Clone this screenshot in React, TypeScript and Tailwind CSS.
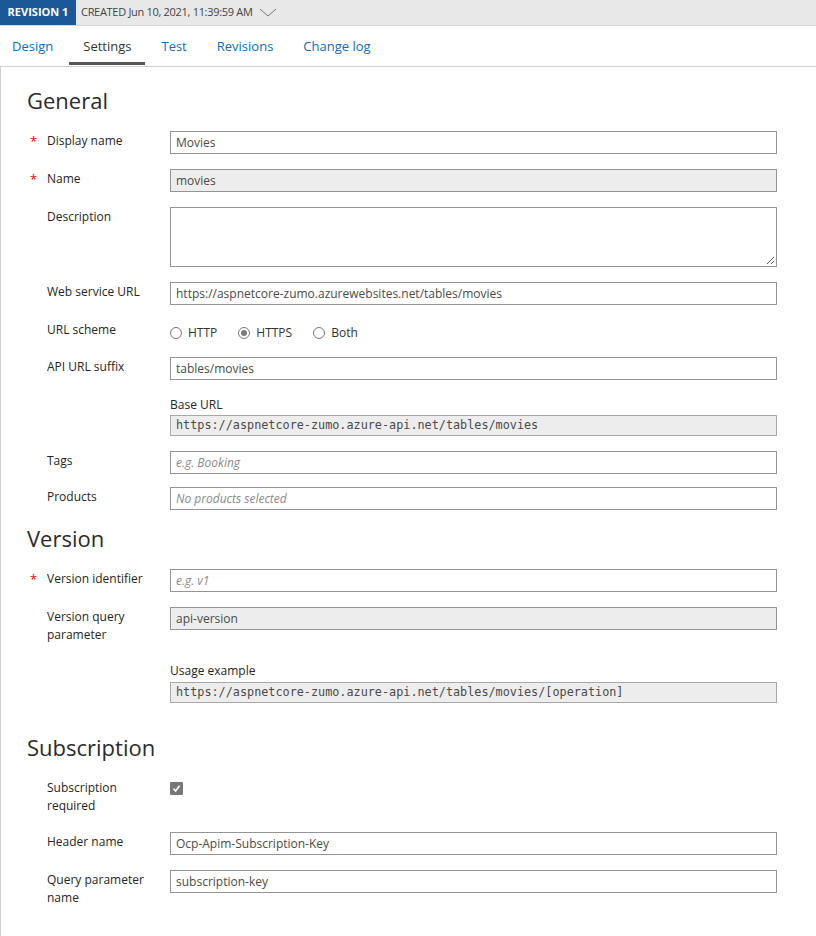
import React from "react";

const font = { fontFamily: '"Open Sans", "Noto Sans", sans-serif' };

function Label({ text, required }: { text: React.ReactNode; required?: boolean }) {
  return (
    <div className="flex w-[143px] shrink-0 pt-[1px]">
      <div className="w-[20px] shrink-0 pl-[3px] text-[13px] leading-[18px] text-[#e00]">{required ? "*" : ""}</div>
      <div className="w-[110px] text-[12px] leading-[18px] text-[#252525]">{text}</div>
    </div>
  );
}

function Input({ value, placeholder, disabled }: { value?: string; placeholder?: string; disabled?: boolean }) {
  return (
    <div
      className={
        "flex h-[23px] w-[607px] items-center border border-[#949494] px-[5px] text-[12px] " +
        (disabled ? "bg-[#ededed] " : "bg-white ")
      }
    >
      {value ? (
        <span className="text-[#4a4a4a]">{value}</span>
      ) : (
        <span className="italic text-[#8a8a8a]">{placeholder}</span>
      )}
    </div>
  );
}

function Row({ label, required, children, className }: { label: React.ReactNode; required?: boolean; children: React.ReactNode; className?: string }) {
  return (
    <div className={"flex " + (className ?? "mb-[15px]")}>
      <Label text={label} required={required} />
      {children}
    </div>
  );
}

function Heading({ children, className }: { children: React.ReactNode; className?: string }) {
  return (
    <div className={"h-[32px] text-[22px] leading-[32px] text-[#2b2b2b] " + (className ?? "")}>{children}</div>
  );
}

function Mono({ text }: { text: string }) {
  return (
    <div className="flex h-[21px] w-[607px] items-center border border-[#a8a8a8] bg-[#ededed] px-[5px] text-[11.8px] text-[#4a4a4a]" style={{ fontFamily: '"DejaVu Sans Mono", monospace' }}>
      {text}
    </div>
  );
}

function Radio({ label, checked }: { label: string; checked?: boolean }) {
  return (
    <div className="flex items-center gap-[6px]">
      <div className="flex h-[12px] w-[12px] items-center justify-center rounded-full border border-[#777] bg-white">
        {checked && <div className="h-[6px] w-[6px] rounded-full bg-[#7a7a7a]" />}
      </div>
      <span className="text-[12px] text-[#333]">{label}</span>
    </div>
  );
}

export default function App() {
  return (
    <div className="h-[936px] w-[816px] bg-white" style={font}>
      {/* top bar */}
      <div className="flex h-[26px] items-center border-b border-[#d6d6d6] bg-[#e8e8e8]">
        <div className="flex h-full w-[76px] items-center justify-center bg-[#1b5898] text-[11px] font-bold text-white">REVISION 1</div>
        <div className="ml-[5px] text-[11px] tracking-[-0.3px] text-[#444]">CREATED Jun 10, 2021, 11:39:59 AM</div>
        <svg width="18" height="10" viewBox="0 0 18 10" className="ml-[6px]">
          <polyline points="1,1 9,8 17,1" fill="none" stroke="#777" strokeWidth="1" />
        </svg>
      </div>
      {/* tabs */}
      <div className="-ml-[2px] flex h-[41px] gap-[2px] border-b border-[#d0d0d0]">
        {["Design", "Settings", "Test", "Revisions", "Change log"].map((t) => {
          const active = t === "Settings";
          return (
            <div key={t} className="relative flex items-center px-[14px] pt-[2px] text-[13px]">
              <span className={active ? "text-[#333]" : "text-[#0f6cbd]"}>{t}</span>
              {active && <div className="absolute bottom-[1px] left-0 right-0 h-[3px] bg-[#555]" />}
            </div>
          );
        })}
      </div>
      {/* content */}
      <div className="border-l border-[#cfcfcf] pl-[26px] pt-[17px]">
        <Heading className="mb-[15px]">General</Heading>
        <Row label="Display name" required>
          <Input value="Movies" />
        </Row>
        <Row label="Name" required>
          <Input value="movies" disabled />
        </Row>
        <Row label="Description">
          <div className="relative h-[60px] w-[607px] border border-[#949494]">
            <svg width="9" height="9" viewBox="0 0 9 9" className="absolute bottom-[1px] right-[1px]">
              <line x1="8" y1="1" x2="1" y2="8" stroke="#555" strokeWidth="1" />
              <line x1="8" y1="5" x2="5" y2="8" stroke="#555" strokeWidth="1" />
            </svg>
          </div>
        </Row>
        <Row label="Web service URL">
          <Input value="https://aspnetcore-zumo.azurewebsites.net/tables/movies" />
        </Row>
        <Row label="URL scheme">
          <div className="flex h-[22px] items-center gap-[21px] pt-[4px]">
            <Radio label="HTTP" />
            <Radio label="HTTPS" checked />
            <Radio label="Both" />
          </div>
        </Row>
        <Row label="API URL suffix">
          <Input value="tables/movies" />
        </Row>
        <Row label="">
          <div>
            <div className="h-[20px] text-[12px] leading-[20px] text-[#252525]">Base URL</div>
            <Mono text="https://aspnetcore-zumo.azure-api.net/tables/movies" />
          </div>
        </Row>
        <Row label="Tags" className="mb-[13px]">
          <Input placeholder="e.g. Booking" />
        </Row>
        <Row label="Products" className="mb-[12px]">
          <Input placeholder="No products selected" />
        </Row>

        <Heading className="mb-[15px]">Version</Heading>
        <Row label="Version identifier" required>
          <Input placeholder="e.g. v1" />
        </Row>
        <Row label="Version query parameter" className="mb-[17px]">
          <div className="h-[36px]">
            <Input value="api-version" disabled />
          </div>
        </Row>
        <Row label="" className="mb-[28px]">
          <div>
            <div className="mb-[1px] h-[20px] text-[12px] leading-[20px] text-[#252525]">Usage example</div>
            <Mono text="https://aspnetcore-zumo.azure-api.net/tables/movies/[operation]" />
          </div>
        </Row>

        <Heading className="mb-[15px]">Subscription</Heading>
        <Row label="Subscription required" className="mb-[17px]">
          <div className="h-[36px] pt-[4px]">
            <div className="flex h-[13px] w-[13px] items-center justify-center rounded-[1px] bg-[#777]">
              <svg width="9" height="9" viewBox="0 0 9 9">
                <polyline points="1.5,4.8 3.6,7 7.6,1.8" fill="none" stroke="#fff" strokeWidth="1.6" />
              </svg>
            </div>
          </div>
        </Row>
        <Row label="Header name" className="mb-[15px]">
          <Input value="Ocp-Apim-Subscription-Key" />
        </Row>
        <Row label="Query parameter name">
          <Input value="subscription-key" />
        </Row>
        <div className="h-[40px]" />
      </div>
    </div>
  );
}
